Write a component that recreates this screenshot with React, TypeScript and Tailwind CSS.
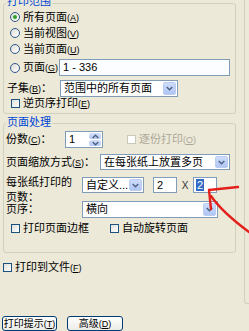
import React from "react";

const FONT = "font-['Liberation_Sans','Noto_Sans_CJK_SC',sans-serif]";

const M = ({ t, k, tail }: { t: string; k: string; tail?: string }) => (
  <span className="whitespace-nowrap">
    {t}
    <span className="text-[9px]">
      (<span className="underline">{k}</span>)
    </span>
    {tail}
  </span>
);

const Radio = ({ checked }: { checked?: boolean }) => (
  <span className="w-[10px] h-[10px] rounded-full border border-[#2F5A8A] bg-gradient-to-br from-[#DCDCD5] to-white flex items-center justify-center shrink-0">
    {checked && <span className="w-[4px] h-[4px] rounded-full bg-[#2BA02B]" />}
  </span>
);

const Check = ({ disabled }: { disabled?: boolean }) => (
  <span
    className={
      disabled
        ? "w-[9px] h-[9px] border border-[#CAC8BB] bg-white shrink-0"
        : "w-[9px] h-[9px] border border-[#1C5180] bg-gradient-to-br from-[#E0E0DA] to-white shrink-0"
    }
  />
);

const Chevron = ({ up }: { up?: boolean }) => (
  <svg width="7" height="5" viewBox="0 0 7 5">
    <path
      d={up ? "M0.7 4 L3.5 1.2 L6.3 4" : "M0.7 1 L3.5 3.8 L6.3 1"}
      stroke="#4D6185"
      strokeWidth="1.4"
      fill="none"
    />
  </svg>
);

const DropBtn = () => (
  <span className="w-[13px] my-[1px] mr-[1px] rounded-[2px] bg-gradient-to-b from-[#CDDCFB] to-[#AFC5F3] border border-[#BBCDF3] flex items-center justify-center shrink-0">
    <Chevron />
  </span>
);

const Combo = ({ text, w, h = "h-[17px]" }: { text: string; w: string; h?: string }) => (
  <div className={`flex ${h} ${w} border border-[#7F9DB9] bg-white shrink-0`}>
    <span className="flex-1 px-[3px] flex items-center overflow-hidden whitespace-nowrap leading-none">
      {text}
    </span>
    <DropBtn />
  </div>
);

export default function App() {
  return (
    <div
      className={`relative w-[249px] h-[331px] overflow-hidden bg-[#ECE9D8] text-[11px] text-black flex ${FONT}`}
    >
      <div className="w-[244px] flex flex-col shrink-0">
        {/* Group 1 */}
        <div className="relative ml-[3px] mt-[3px] w-[233px] h-[111px] border border-[#D0D0BF] rounded-[3px] flex flex-col">
          <span className="absolute -top-[8px] left-[2px] px-[1px] bg-[#ECE9D8] text-[#0046D5] leading-[11px]">
            打印范围
          </span>
          <div className="mt-[5px] h-[16px] pl-[6px] flex items-center gap-[3px]">
            <Radio checked />
            <M t="所有页面" k="A" />
          </div>
          <div className="h-[16px] pl-[6px] flex items-center gap-[3px]">
            <Radio />
            <M t="当前视图" k="V" />
          </div>
          <div className="h-[16px] pl-[6px] flex items-center gap-[3px]">
            <Radio />
            <M t="当前页面" k="U" />
          </div>
          <div className="mt-[2px] h-[17px] flex items-center">
            <div className="w-[55px] pl-[6px] flex items-center gap-[3px]">
              <Radio />
              <M t="页面" k="G" />
            </div>
            <div className="w-[171px] h-[17px] border border-[#7F9DB9] bg-[#FBFDFF] px-[3px] flex items-center">
              1 - 336
            </div>
          </div>
          <div className="mt-[4px] h-[17px] flex items-center">
            <div className="w-[56px] pl-[3px]">
              <M t="子集" k="B" tail="：" />
            </div>
            <Combo text="范围中的所有页面" w="w-[118px]" />
          </div>
          <div className="h-[12px] pl-[7px] flex items-center gap-[3px]">
            <Check />
            <M t="逆页序打印" k="E" />
          </div>
        </div>

        {/* Group 2 */}
        <div className="relative ml-[3px] mt-[9px] w-[233px] h-[130px] border border-[#D0D0BF] rounded-[3px] flex flex-col">
          <span className="absolute -top-[7px] left-[2px] px-[1px] bg-[#ECE9D8] text-[#0046D5] leading-[11px]">
            页面处理
          </span>
          <div className="mt-[7px] h-[17px] flex items-center">
            <div className="w-[61px] pl-[2px]">
              <M t="份数" k="C" tail="：" />
            </div>
            <div className="w-[38px] h-[17px] border border-[#7F9DB9] bg-white flex">
              <span className="flex-1 px-[3px] flex items-center">1</span>
              <span className="w-[12px] m-[1px] flex flex-col gap-[1px]">
                <span className="flex-1 rounded-[2px] bg-gradient-to-b from-[#D3E0FB] to-[#B4C8F3] flex items-center justify-center">
                  <Chevron up />
                </span>
                <span className="flex-1 rounded-[2px] bg-gradient-to-b from-[#D3E0FB] to-[#B4C8F3] flex items-center justify-center">
                  <Chevron />
                </span>
              </span>
            </div>
            <div className="ml-[24px] flex items-center gap-[3px] text-[#ACA899]">
              <Check disabled />
              <M t="逐份打印" k="O" />
            </div>
          </div>
          <div className="mt-[6px] h-[16px] flex items-center">
            <div className="w-[96px] pl-[2px]">
              <M t="页面缩放方式" k="S" tail="：" />
            </div>
            <Combo text="在每张纸上放置多页" w="w-[130px]" h="h-[16px]" />
          </div>
          <div className="mt-[5px] h-[26px] flex items-start">
            <div className="w-[78px] pl-[2px] leading-[15px]">
              每张纸打印的
              <br />
              页数：
            </div>
            <div className="mt-[2px] flex items-center">
              <Combo text="自定义..." w="w-[62px]" h="h-[16px]" />
              <div className="ml-[9px] w-[24px] h-[16px] border border-[#7F9DB9] bg-white px-[3px] flex items-center">
                2
              </div>
              <span className="w-[16px] text-center text-[10px] text-[#333]">X</span>
              <div className="w-[24px] h-[16px] border border-[#7F9DB9] bg-white pl-[2px] flex items-center">
                <span className="bg-[#316AC5] text-white px-[1px] leading-[12px]">2</span>
              </div>
            </div>
          </div>
          <div className="h-[17px] flex items-center">
            <div className="w-[78px] pl-[2px]">页序：</div>
            <Combo text="横向" w="w-[136px]" />
          </div>
          <div className="mt-[4px] h-[12px] pl-[7px] flex items-center">
            <div className="w-[99px] flex items-center gap-[3px]">
              <Check />
              <span>打印页面边框</span>
            </div>
            <div className="flex items-center gap-[3px]">
              <Check />
              <span>自动旋转页面</span>
            </div>
          </div>
        </div>

        <div className="mt-[8px] h-[12px] pl-[3px] flex items-center gap-[3px]">
          <Check />
          <M t="打印到文件" k="F" />
        </div>

        <div className="mt-[43px] pl-[2px] flex gap-[10px] text-[10px]">
          <button className="w-[55px] h-[15px] rounded-[3px] border border-[#003C74] bg-gradient-to-b from-white to-[#ECEBE6] flex items-center justify-center leading-none">
            <M t="打印提示" k="T" />
          </button>
          <button className="w-[56px] h-[15px] rounded-[3px] border border-[#003C74] bg-gradient-to-b from-white to-[#ECEBE6] flex items-center justify-center leading-none">
            <M t="高级" k="D" />
          </button>
        </div>
      </div>

      <div className="flex-1 h-[304px] border-l border-b border-[#D0D0BF] rounded-bl-[3px]" />

      <svg
        className="absolute left-0 top-0 pointer-events-none"
        width="249"
        height="331"
        viewBox="0 0 249 331"
      >
        <g stroke="#E3201B" strokeWidth="2.4" fill="none" strokeLinecap="round">
          <path d="M238 187 L209 190" />
          <path d="M209 190 L211 209" />
          <path d="M211 196 Q222 212 249 232" />
        </g>
      </svg>
    </div>
  );
}
